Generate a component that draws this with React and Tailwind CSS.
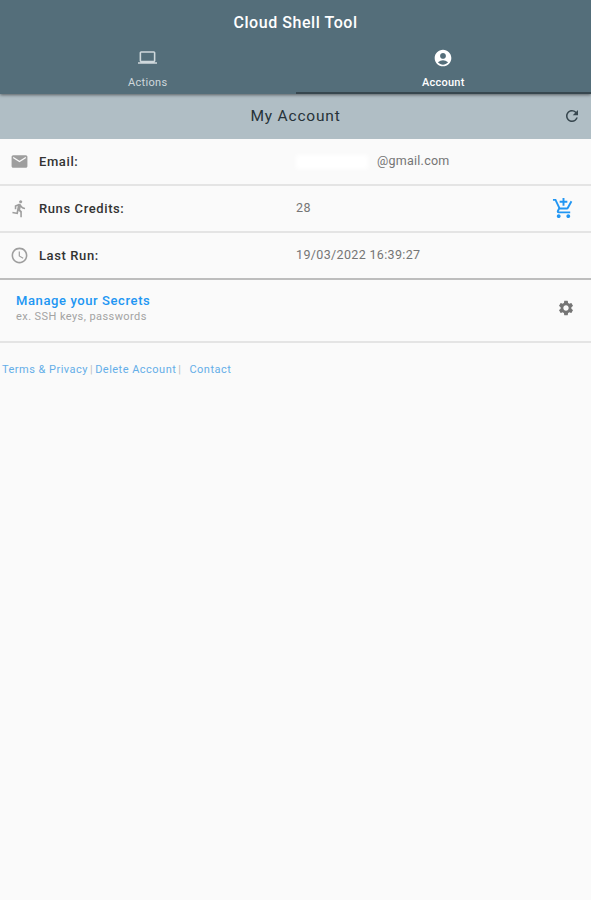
import React from "react";
import { MdLaptop, MdAccountCircle, MdRefresh, MdEmail, MdDirectionsRun, MdAccessTime, MdOutlineAddShoppingCart, MdSettings } from "react-icons/md";

function Row({ icon, label, border, children }) {
  return (
    <div className={`flex items-center h-[47px] border-b-2 ${border}`}>
      <div className="w-[39px] pl-[10px] flex items-center text-[#9e9e9e] shrink-0">{icon}</div>
      <div className="w-[257px] shrink-0 text-[13px] font-medium tracking-[0.6px] text-[#333]">{label}</div>
      <div className="flex-1 flex items-center text-[12.5px] tracking-[0.35px] text-[#757575]">{children}</div>
    </div>
  );
}

export default function App() {
  return (
    <div className="w-[591px] h-[900px] bg-[#fafafa] overflow-hidden font-['Roboto',sans-serif]">
      <header className="h-[94px] bg-[#546e7a] shadow-[0_1px_3px_rgba(0,0,0,0.5)] relative z-10 flex flex-col">
        <div className="h-[46px] flex items-center justify-center text-white text-[16px] font-medium tracking-[0.55px]">Cloud Shell Tool</div>
        <div className="flex flex-1">
          <div className="w-1/2 flex flex-col items-center text-[#cfd8dc] h-[48px]">
            <MdLaptop size={19} className="mt-[2px]" />
            <span className="text-[11px] tracking-[0.3px] mt-[9px] leading-[13px]">Actions</span>
          </div>
          <div className="w-1/2 flex flex-col items-center text-white h-[48px] border-b-2 border-[#37474f]">
            <MdAccountCircle size={20} className="mt-[2px]" />
            <span className="text-[11px] font-medium tracking-[0.25px] mt-[8px] leading-[13px]">Account</span>
          </div>
        </div>
      </header>

      <div className="h-[45px] bg-[#b0bec5] relative flex items-center justify-center text-[15.5px] tracking-[0.8px] text-[#263238]">
        My Account
        <MdRefresh size={18} className="absolute right-[10px] top-[13px] text-[#37474f]" />
      </div>

      <Row border="border-[#e4e4e4]" label="Email:" icon={<MdEmail size={19} />}>
        <span className="w-[72px] h-[14px] bg-white blur-[2px] shrink-0 mr-[9px]"></span>
        <span className="tracking-[0.25px]">@gmail.com</span>
      </Row>
      <Row border="border-[#e4e4e4]" label="Runs Credits:" icon={<MdDirectionsRun size={19} />}>
        <span className="flex-1">28</span>
        <MdOutlineAddShoppingCart size={23} className="text-[#2196f3] mr-[16px]" />
      </Row>
      <Row border="border-[#bdbdbd]" label="Last Run:" icon={<MdAccessTime size={19} />}>
        19/03/2022 16:39:27
      </Row>

      <div className="h-[63px] border-b-2 border-[#e4e4e4] flex items-center pl-[16px] pr-[17px] justify-between">
        <div className="flex flex-col -mt-[5px]">
          <span className="text-[13px] font-medium tracking-[0.6px] text-[#2196f3] leading-[15px]">Manage your Secrets</span>
          <span className="text-[11px] tracking-[0.42px] text-[#a3a3a3] leading-[13px] mt-[2px]">ex. SSH keys, passwords</span>
        </div>
        <MdSettings size={18} className="text-[#757575] -mt-[5px] translate-x-[1px]" />
      </div>

      <div className="flex items-center pl-[2px] mt-[20px] text-[11px] tracking-[0.48px] text-[#64aee8] leading-[13px]">
        <span>Terms &amp; Privacy</span>
        <span className="mx-[2px] text-[#bdbdbd]">|</span>
        <span>Delete Account</span>
        <span className="ml-[2px] mr-[8px] text-[#bdbdbd]">|</span>
        <span>Contact</span>
      </div>
    </div>
  );
}
